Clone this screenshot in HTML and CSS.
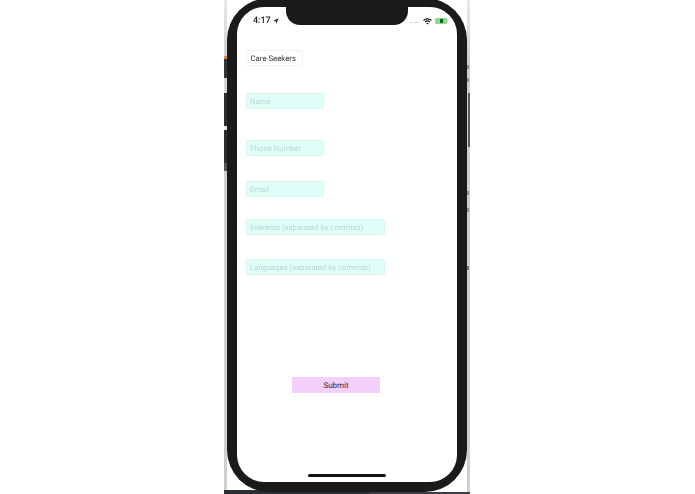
FILE: index.html
```html
<!DOCTYPE html>
<html lang="en">
<head>
<meta charset="utf-8">
<title>Care Seekers</title>
<link rel="stylesheet" href="styles.css">
</head>
<body>
<main class="backdrop">
  <div class="phone">
    <div class="screen">
      <div class="notch"></div>
      <header class="status">
        <span class="time">4:17</span>
        <svg class="arrow" viewBox="0 0 8 8"><path d="M7.6.4 .4 3.7l3.2.7.7 3.2z"/></svg>
        <span class="spacer"></span>
        <span class="signal"><i></i><i></i><i></i><i></i></span>
        <svg class="wifi" viewBox="0 0 12 9"><path d="M6 8.6 4.4 6.9a2.3 2.3 0 0 1 3.2 0zM3.4 5.9 2.3 4.7a5.3 5.3 0 0 1 7.4 0L8.6 5.9a3.7 3.7 0 0 0-5.2 0zM1.3 3.7 .2 2.6a8.3 8.3 0 0 1 11.6 0l-1.1 1.1a6.7 6.7 0 0 0-9.4 0z"/></svg>
        <span class="battery"><span class="charge"></span></span>
      </header>
      <form class="form">
        <div class="pill">Care Seekers</div>
        <input class="field short name" placeholder="Name">
        <input class="field short phone-number" placeholder="Phone Number">
        <input class="field short email" placeholder="Email">
        <input class="field long interests" placeholder="Interests (separated by commas)">
        <input class="field long languages" placeholder="Languages (separated by commas)">
        <button class="submit" type="button">Submit</button>
      </form>
      <div class="home"></div>
    </div>
  </div>
</main>
</body>
</html>
```
FILE: styles.css
```css
* { box-sizing: border-box; }
html, body { margin: 0; padding: 0; background: #fff; }
body {
  width: 695px;
  height: 494px;
  overflow: hidden;
  font-family: Roboto, "Liberation Sans", sans-serif;
  text-rendering: geometricPrecision;
}

.backdrop {
  width: 246px;
  height: 494px;
  margin-left: 224px;
  overflow: hidden;
  padding: 0 3px;
  background:
    linear-gradient(#2b3036, #2b3036) left 0 bottom 0 / 146px 4px no-repeat,
    linear-gradient(#3a3d42, #3a3d42) right 0 bottom 0 / 100px 2px no-repeat,
    linear-gradient(#5a5c5f, #5a5c5f) right 0 top 93px / 2px 54px no-repeat,
    linear-gradient(#8a8a8a, #8a8a8a) right 1px top 65px / 2px 4px no-repeat,
    linear-gradient(#8a8a8a, #8a8a8a) right 1px top 78px / 2px 4px no-repeat,
    linear-gradient(#8a8a8a, #8a8a8a) right 1px top 191px / 2px 4px no-repeat,
    linear-gradient(#8a8a8a, #8a8a8a) right 1px top 208px / 2px 4px no-repeat,
    linear-gradient(#777, #777) right 1px top 266px / 2px 4px no-repeat,
    linear-gradient(#eaeaea, #cfcfcf 60px, #cfcfcf) right 0 top 0 / 3px 100% no-repeat,
    linear-gradient(#cf8a4e, #cf8a4e) left 0 top 56px / 3px 3px no-repeat,
    linear-gradient(#33353a, #33353a) left 0 top 59px / 3px 19px no-repeat,
    linear-gradient(#d6d6d6, #d6d6d6) left 0 top 78px / 3px 15px no-repeat,
    linear-gradient(#2e2f33, #2e2f33) left 0 top 93px / 3px 33px no-repeat,
    linear-gradient(#e8e8e8, #e8e8e8) left 0 top 126px / 3px 4px no-repeat,
    linear-gradient(#2e2f33, #2e2f33) left 0 top 130px / 3px 33px no-repeat,
    linear-gradient(#555, #555) left 0 top 163px / 3px 8px no-repeat,
    linear-gradient(#eaeaea, #cfcfcf 60px, #cfcfcf) left 0 top 0 / 3px 100% no-repeat;
}

.phone {
  width: 240px;
  height: 494px;
  margin-top: -2px;
  padding: 9px 10px 10px;
  background: #1a1a1a;
  border-radius: 42px;
  filter: blur(0.35px);
}

.screen {
  position: relative;
  height: 475px;
  background: #fff;
  border-radius: 27px;
  overflow: hidden;
  display: flex;
  flex-direction: column;
}

.notch {
  position: absolute;
  top: 0;
  left: 49px;
  width: 122px;
  height: 18px;
  background: #1a1a1a;
  border-radius: 0 0 14px 14px;
}

.status {
  display: flex;
  align-items: center;
  height: 12px;
  margin-top: 8px;
  padding: 0 10px 0 16px;
  color: #222;
}
.time { font-size: 9px; font-weight: 500; line-height: 12px; }
.arrow { width: 6px; height: 6px; margin-left: 2px; fill: #222; }
.spacer { flex: 1; }
.signal { display: flex; gap: 1px; margin-right: 4px; margin-top: 3px; }
.signal i { width: 1.5px; height: 1.5px; border-radius: 50%; background: #bbb; }
.wifi { width: 9px; height: 7px; fill: #111; margin-right: 3px; }
.battery {
  display: flex;
  align-items: center;
  justify-content: center;
  width: 12px;
  height: 6px;
  background: #86e08c;
  border-radius: 1.5px;
  box-shadow: 1px 0 0 -0.5px #bbb;
}
.charge { width: 3px; height: 4px; background: #1d5a34; }

.form {
  display: flex;
  flex-direction: column;
  align-items: flex-start;
  padding: 23px 0 0 8.5px;
  flex: 1;
}

.pill {
  width: 57px;
  height: 16px;
  margin-bottom: 27px;
  padding: 1px 0 0 4px;
  border: 1px solid #f0f0f0;
  border-radius: 3px;
  color: #333;
  font-size: 7.8px;
  line-height: 14px;
  white-space: nowrap;
}

.field {
  display: block;
  height: 16px;
  margin-left: 0.5px;
  padding: 1px 0 0 3px;
  background: #e0fff8;
  border: 1px solid #d8f7ef;
  border-radius: 2px;
  font-family: inherit;
  font-size: 7.7px;
  outline: none;
  text-rendering: geometricPrecision;
}
.field::placeholder { color: #bcd5d0; opacity: 1; }
.short { width: 78px; }
.long { width: 139px; }
.name { margin-bottom: 31px; }
.phone-number { margin-bottom: 25px; }
.email { margin-bottom: 22px; }
.interests { margin-bottom: 24px; }

.submit {
  align-self: flex-start;
  width: 88px;
  height: 16px;
  margin: 102px 0 0 46.5px;
  padding: 1px 0 0;
  background: #f3cffb;
  border: 0;
  color: #3a2a46;
  font-family: inherit;
  font-size: 8px;
  line-height: 15px;
  text-rendering: geometricPrecision;
}

.home {
  position: absolute;
  left: 71px;
  bottom: 5px;
  width: 78px;
  height: 3px;
  background: #111;
  border-radius: 2px;
}
```
